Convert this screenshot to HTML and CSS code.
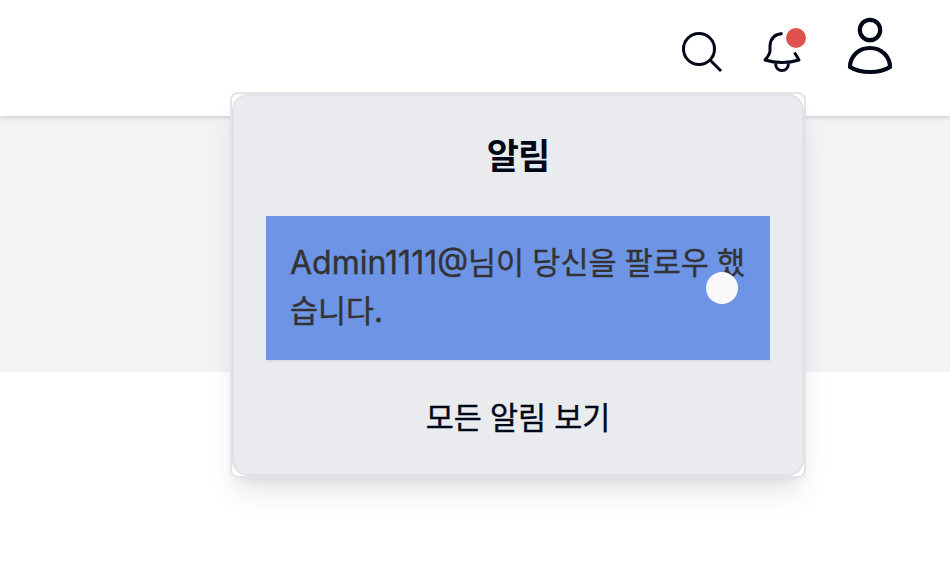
FILE: index.html
```html
<!DOCTYPE html>
<html lang="ko">
<head>
<meta charset="utf-8">
<title>알림</title>
<link rel="stylesheet" href="styles.css">
</head>
<body>
<header class="header">
  <svg class="icon search" viewBox="0 0 48 48"><circle cx="21" cy="21" r="15.500"/><path d="M32 32L43 43"/></svg>
  <div class="bell-wrap">
    <svg class="icon bell" viewBox="0 0 48 48"><path d="M24.500 5.500C17 6 12.500 10.500 12 18V23.500Q11.500 26 9 29.500Q7.500 31 7 32Q15 34.500 24 34.500T41 32Q39 28.500 36.500 24.500M17.500 35C17.500 45 30.500 45 30.500 35"/></svg>
    <span class="badge"></span>
  </div>
  <svg class="icon user" viewBox="0 0 64 64"><circle cx="32" cy="16" r="10.200"/><path d="M32 34C20 34 12 43 12 53Q20 58 32 58T52 53C52 43 44 34 32 34Z"/></svg>
</header>
<main class="banner"></main>
<section class="popover">
  <div class="panel">
    <h2 class="title">알림</h2>
    <div class="item">
      <p class="message"><span class="latin">Admin1111@</span>님이 당신을 팔로우 했<br>습니다.</p>
      <span class="dot"></span>
    </div>
    <a class="all">모든 알림 보기</a>
  </div>
</section>
</body>
</html>
```
FILE: styles.css
```css
* { box-sizing: border-box; }
body {
  margin: 0;
  height: 570px;
  overflow: hidden;
  background: #fff;
  color: #020817;
  font-family: "Noto Sans CJK KR", sans-serif;
}
.header {
  position: relative;
  display: flex;
  justify-content: flex-end;
  height: 116px;
  padding-right: 48px;
  background: #fff;
  box-shadow: 0 2px 4px rgba(0, 0, 0, .14);
}
.icon { display: block; fill: none; stroke: currentColor; stroke-linejoin: round; }
.search, .bell { width: 48px; height: 48px; stroke-width: 3; }
.search { margin-top: 28px; }
.bell-wrap { position: relative; width: 48px; height: 48px; margin: 28px 32px 0; }
.badge {
  position: absolute;
  left: 28px;
  top: 0;
  width: 20px;
  height: 20px;
  border-radius: 50%;
  background: #df524e;
}
.user { width: 64px; height: 64px; margin-top: 14px; stroke-width: 4.2; }
.banner { height: 256px; background: #f2f3f5; }
.popover {
  position: absolute;
  left: 230px;
  top: 92px;
  width: 576px;
  height: 386px;
  border: 2px solid #e2e4ea;
  border-radius: 8px;
  background: #fff;
  box-shadow: 0 20px 30px -6px rgba(0, 0, 0, .1), 0 8px 12px -8px rgba(0, 0, 0, .1);
}
.panel {
  height: 382px;
  padding: 32px;
  border: 2px solid #e0e2e8;
  border-radius: 16px;
  background: #eaebef;
}
.title { margin: -2px 0 34px; height: 56px; font-size: 35px; line-height: 56px; font-weight: 700; letter-spacing: -1px; text-align: center; }
.item {
  position: relative;
  height: 146px;
  padding: 21px 24px;
  border-bottom: 2px solid #dcdde3;
  background: #6e94e6;
}
.message { margin: 0; color: #333; font-size: 30.5px; line-height: 48px; word-spacing: -.4px; white-space: nowrap; -webkit-text-stroke: .4px; }
.latin { font-family: Inter, sans-serif; font-size: 32px; line-height: 0; letter-spacing: 0; }
.dot { position: absolute; left: 440px; top: 56px; width: 32px; height: 32px; border-radius: 50%; background: #fafafa; }
.all { display: block; margin-top: 30px; font-size: 30.5px; line-height: 48px; word-spacing: -.4px; text-align: center; -webkit-text-stroke: .4px; }
```
